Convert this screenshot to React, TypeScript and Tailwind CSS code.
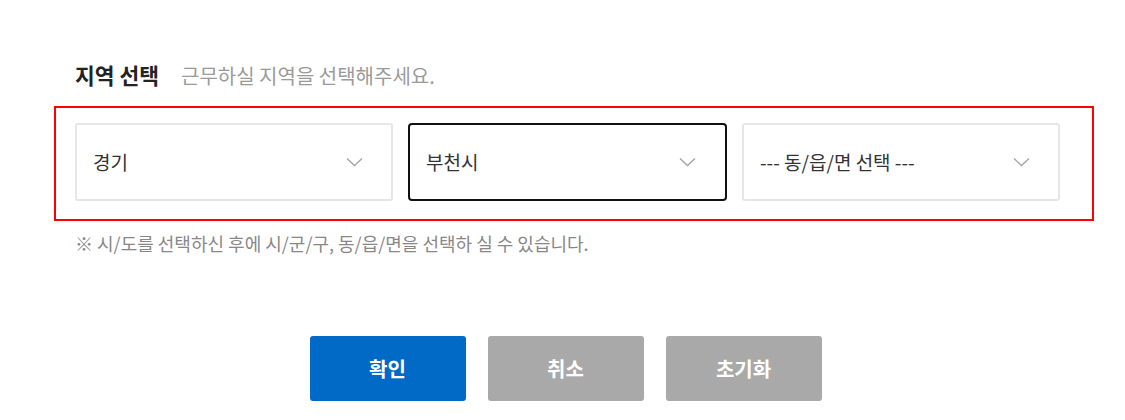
const FONT = "font-['Noto_Sans_CJK_KR','Noto_Sans',sans-serif]";

function Chevron() {
  return (
    <svg width="17" height="10" viewBox="0 0 17 10" fill="none" className="shrink-0">
      <path d="M1 1.5l7.5 7 7.5-7" stroke="#a3a3a3" strokeWidth="1.3" />
    </svg>
  );
}

interface SelectBoxProps {
  label: string;
  active?: boolean;
}

function SelectBox({ label, active }: SelectBoxProps) {
  return (
    <div
      className={
        active
          ? 'flex h-[78px] w-[319px] items-center justify-between rounded-[4px] border-2 border-[#111] bg-white pl-[16px] pr-[29px]'
          : 'flex h-[78px] w-[318px] items-center justify-between rounded-[3px] border-2 border-[#e6e6e6] bg-white pl-[16px] pr-[28px]'
      }
    >
      <span className="text-[19px] leading-[28px] text-[#333]">{label}</span>
      <Chevron />
    </div>
  );
}

export default function App() {
  return (
    <div className={`${FONT} h-[420px] w-[1125px] bg-white pt-[60px]`}>
      <div className="flex h-[30px] items-baseline gap-[22px] pl-[75px]">
        <h3 className="text-[21.5px] font-bold leading-[30px] text-[#222]">지역 선택</h3>
        <p className="text-[20px] leading-[30px] text-[#9a9a9a]">근무하실 지역을 선택해주세요.</p>
      </div>

      <div className="ml-[54px] mt-[16px] w-[1040px] border-2 border-[#ff0000] pb-[18px] pl-[19px] pt-[15px]">
        <div className="flex gap-[15px]">
          <SelectBox label="경기" />
          <SelectBox label="부천시" active />
          <SelectBox label="--- 동/읍/면 선택 ---" />
        </div>
      </div>

      <p className="mt-[10px] pl-[75px] text-[18px] leading-[24px] text-[#888]">
        ※ 시/도를 선택하신 후에 시/군/구, 동/읍/면을 선택하 실 수 있습니다.
      </p>

      <div className="mt-[81px] flex justify-center gap-[22px] pl-[6px]">
        <button className="h-[65px] w-[156px] rounded-[3px] bg-[#006ac6] text-[20px] font-bold text-white">
          확인
        </button>
        <button className="h-[65px] w-[156px] rounded-[3px] bg-[#a9a9a9] text-[20px] font-bold text-white">
          취소
        </button>
        <button className="h-[65px] w-[156px] rounded-[3px] bg-[#a9a9a9] text-[20px] font-bold text-white">
          초기화
        </button>
      </div>
    </div>
  );
}
